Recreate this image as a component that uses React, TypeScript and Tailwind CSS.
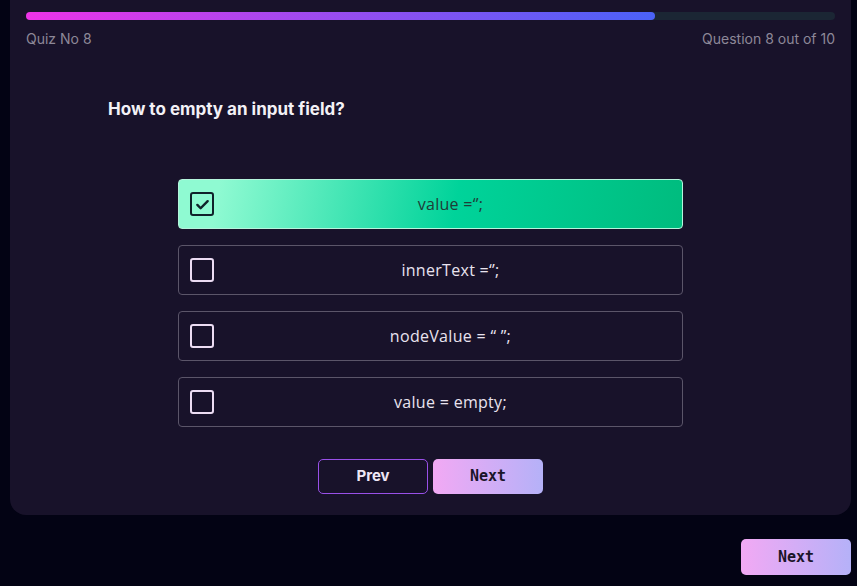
import React from "react";

const options = [
  { label: "value =‘’;", selected: true },
  { label: "innerText =‘’;", selected: false },
  { label: "nodeValue = “ ”;", selected: false },
  { label: "value = empty;", selected: false },
];

function Check({ selected }: { selected: boolean }) {
  if (selected) {
    return (
      <div className="w-[24px] h-[24px] rounded-[3px] border-[2.5px] border-[#10212a] flex items-center justify-center">
        <svg width="15" height="15" viewBox="0 0 16 16" fill="none">
          <path d="M2.5 8.5 L6 12 L13.5 4.5" stroke="#10212a" strokeWidth="2.6" strokeLinecap="round" strokeLinejoin="round" />
        </svg>
      </div>
    );
  }
  return <div className="w-[24px] h-[24px] rounded-[3px] border-[2.5px] border-[#ecdcf3]" />;
}

export default function App() {
  return (
    <div className="w-[857px] h-[586px] bg-[#030314] flex flex-col" style={{ fontFamily: "Inter, 'Noto Sans', sans-serif" }}>
      <div className="ml-[10px] w-[841px] h-[515px] bg-[#18122a] rounded-b-[16px] px-[16px] pt-[12px] flex flex-col">
        <div className="h-[8px] w-full bg-[#1b2634] rounded-full">
          <div className="h-full w-[629px] rounded-full bg-[linear-gradient(90deg,#ee33e8,#a748ee_40%,#4a62f7)]" />
        </div>
        <div className="flex justify-between mt-[10px] text-[14px] text-[#8d8898] leading-[17px]">
          <span>Quiz No 8</span>
          <span>Question 8 out of 10</span>
        </div>
        <div className="pl-[82px] mt-[52px] text-[17px] font-bold text-[#f3f1f6] leading-[20px]">
          How to empty an input field?
        </div>
        <div className="mt-[60px] flex flex-col gap-[16px] items-center">
          {options.map((o) => (
            <div
              key={o.label}
              className={
                o.selected
                  ? "w-[505px] h-[50px] rounded-[4px] border border-[#b5f5dc] bg-[linear-gradient(100deg,#8ffad2_8%,#00d39a_55%,#00bc7e)] flex items-center pl-[11px] pr-[11px]"
                  : "w-[505px] h-[50px] rounded-[4px] border border-[#5b5569] bg-[#18122a] flex items-center pl-[11px] pr-[11px]"
              }
            >
              <Check selected={o.selected} />
              <div
                className={"flex-1 text-center text-[16px] tracking-[0.3px] pl-[16px] " + (o.selected ? "text-[#1f3d37]" : "text-[#e9e3ef]")}
                style={{ fontFamily: "'Open Sans', sans-serif" }}
              >
                {o.label}
              </div>
            </div>
          ))}
        </div>
        <div className="mt-[32px] flex justify-center gap-[5px]">
          <button className="w-[110px] h-[35px] rounded-[5px] border border-[#9950e8] text-[#eee6f5] font-bold text-[15px]">
            Prev
          </button>
          <button
            className="w-[110px] h-[35px] rounded-[5px] bg-[linear-gradient(90deg,#f2a9f4,#b5b1f8)] text-[#1a1529] font-bold text-[15px]"
            style={{ fontFamily: "'DejaVu Sans Mono', monospace" }}
          >
            Next
          </button>
        </div>
      </div>
      <div className="flex justify-end pr-[6px] mt-[24px]">
        <button
          className="w-[110px] h-[36px] rounded-[5px] bg-[linear-gradient(90deg,#f2a9f4,#b5b1f8)] text-[#1a1529] font-bold text-[15px]"
          style={{ fontFamily: "'DejaVu Sans Mono', monospace" }}
        >
          Next
        </button>
      </div>
    </div>
  );
}
